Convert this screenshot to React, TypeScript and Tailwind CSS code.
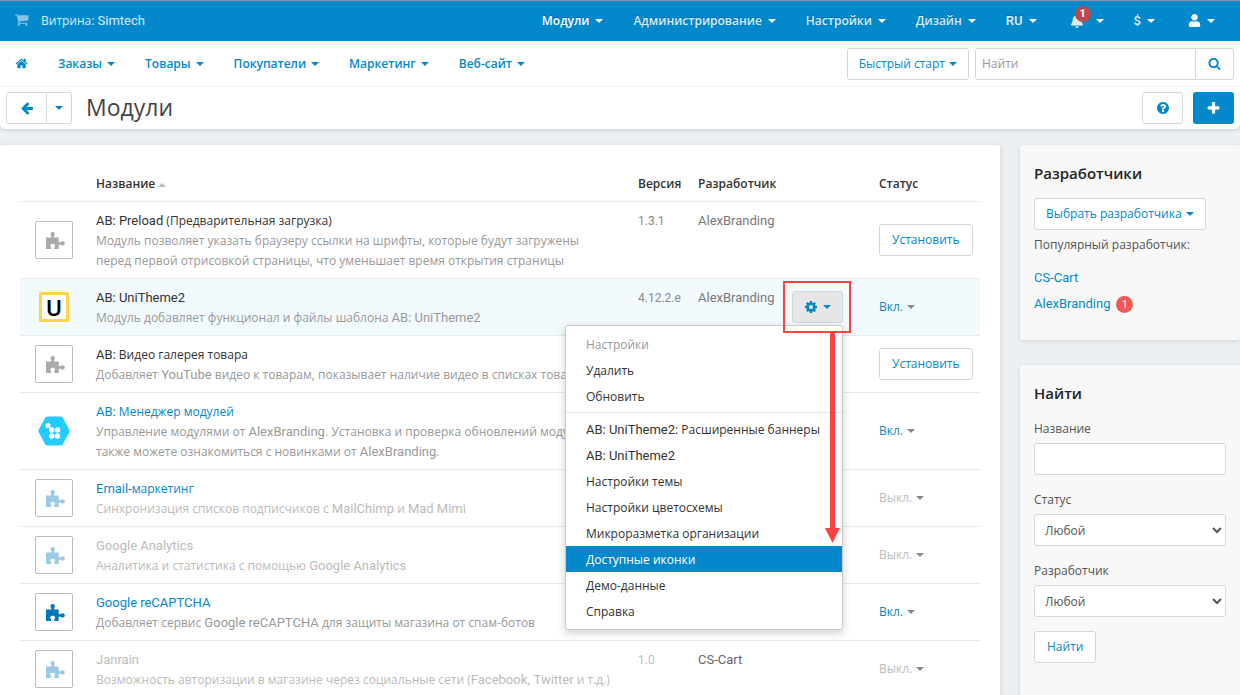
import { Fragment, type ReactNode } from 'react';
import { FaBell, FaUser } from 'react-icons/fa';
import { clsx } from 'clsx';

const ICONS = {
  home: 'M1472 992v480q0 26-19 45t-45 19h-384v-384h-256v384h-384q-26 0-45-19t-19-45v-480q0-1 .5-3t.5-3l575-474 575 474q1 2 1 6zm223-69l-62 74q-8 9-21 11h-3q-13 0-21-7l-692-577-692 577q-12 8-24 7-13-2-21-11l-62-74q-8-10-7-23.5t11-21.5l719-599q32-26 76-26t76 26l244 204v-195q0-14 9-23t23-9h192q14 0 23 9t9 23v408l219 182q10 8 11 21.5t-7 23.5z',
  cart: 'M704 1536q0 52-38 90t-90 38-90-38-38-90 38-90 90-38 90 38 38 90zm896 0q0 52-38 90t-90 38-90-38-38-90 38-90 90-38 90 38 38 90zm128-1088v512q0 24-16.5 42.5t-40.5 21.5l-1044 122q13 60 13 70 0 16-24 64h920q26 0 45 19t19 45-19 45-45 19h-1024q-26 0-45-19t-19-45q0-11 8-31.5t16-36 21.5-40 15.5-29.5l-177-823h-204q-26 0-45-19t-19-45 19-45 45-19h256q16 0 28.5 6.5t19.5 15.5 13 24.5 8 26 5.5 29.5 4.5 26h1201q26 0 45 19t19 45z',
  back: 'M1664 896v128q0 53-32.5 90.5t-84.5 37.5h-704l293 294q38 36 38 90t-38 90l-75 76q-37 37-90 37-52 0-91-37l-651-652q-37-37-37-90 0-52 37-91l651-650q38-38 91-38 52 0 90 38l75 74q38 38 38 91t-38 91l-293 293h704q52 0 84.5 37.5t32.5 90.5z',
  search: 'M1216 832q0-185-131.5-316.5t-316.5-131.5-316.5 131.5-131.5 316.5 131.5 316.5 316.5 131.5 316.5-131.5 131.5-316.5zm512 832q0 52-38 90t-90 38q-54 0-90-38l-343-342q-179 124-399 124-143 0-273.5-55.5t-225-150-150-225-55.5-273.5 55.5-273.5 150-225 225-150 273.5-55.5 273.5 55.5 225 150 150 225 55.5 273.5q0 220-124 399l343 343q37 37 37 90z',
  plus: 'M1600 736v192q0 40-28 68t-68 28h-416v416q0 40-28 68t-68 28h-192q-40 0-68-28t-28-68v-416h-416q-40 0-68-28t-28-68v-192q0-40 28-68t68-28h416v-416q0-40 28-68t68-28h192q40 0 68 28t28 68v416h416q40 0 68 28t28 68z',
  cog: 'M1152 896q0-106-75-181t-181-75-181 75-75 181 75 181 181 75 181-75 75-181zm512-109v222q0 12-8 23t-20 13l-185 28q-19 54-39 91 35 50 107 138 10 12 10 25t-9 23q-27 37-99 108t-94 71q-12 0-26-9l-138-108q-44 23-91 38-16 136-29 186-7 28-36 28h-222q-14 0-24.5-8.5t-11.5-21.5l-28-184q-49-16-90-37l-141 107q-10 9-25 9-14 0-25-11-126-114-165-168-7-10-7-23 0-12 8-23 15-21 51-66.5t54-70.5q-27-50-41-99l-183-27q-13-2-21-12.5t-8-23.5v-222q0-12 8-23t19-13l186-28q14-46 39-92-40-57-107-138-10-12-10-24 0-10 9-23 26-36 98.5-107.5t94.5-71.5q13 0 26 10l138 107q44-23 91-38 16-136 29-186 7-28 36-28h222q14 0 24.5 8.5t11.5 21.5l28 184q49 16 90 37l142-107q9-9 24-9 13 0 25 10 129 119 165 170 7 8 7 22 0 12-8 23-15 21-51 66.5t-54 70.5q26 50 41 98l183 28q13 2 21 12.5t8 23.5z',
  help: 'M1024 1376v-192q0-14-9-23t-23-9h-192q-14 0-23 9t-9 23v192q0 14 9 23t23 9h192q14 0 23-9t9-23zm256-672q0-88-55.5-163t-138.5-116-170-41q-243 0-371 213-15 24 8 42l132 100q7 6 19 6 16 0 25-12 53-68 86-92 34-24 86-24 48 0 85.5 26t37.5 59q0 38-20 61t-68 45q-63 28-115.5 86.5t-52.5 125.5v36q0 14 9 23t23 9h192q14 0 23-9t9-23q0-19 21.5-49.5t54.5-49.5q32-18 49-28.5t46-35 44.5-48 28-60.5 12.5-81zm384 192q0 209-103 385.5t-279.5 279.5-385.5 103-385.5-103-279.5-279.5-103-385.5 103-385.5 279.5-279.5 385.5-103 385.5 103 279.5 279.5 103 385.5z',
};

function Icon({ name, className }: { name: keyof typeof ICONS; className?: string }) {
  return (
    <svg viewBox="0 0 1792 1792" fill="currentColor" className={clsx('shrink-0', className)} aria-hidden="true">
      <path d={ICONS[name]} />
    </svg>
  );
}

function Caret({ className }: { className?: string }) {
  return (
    <svg viewBox="0 0 8 4" fill="currentColor" className={clsx('inline-block h-1 w-2 shrink-0', className)} aria-hidden="true">
      <path d="M0 0h8L4 4z" />
    </svg>
  );
}

function Puzzle({ className }: { className?: string }) {
  return (
    <svg viewBox="0 0 19 17" fill="currentColor" className={clsx('h-[17px] w-[19px]', className)} aria-hidden="true">
      <path d="M0 5.5h5.3c.3-.6.1-1.200-.3-1.800C3.900 2 4.700 0 6.700 0s2.800 2 1.700 3.700c-.4.600-.6 1.200-.3 1.800h4.600v4.200c.5.600 1.200.700 1.900.200 1.700-1.300 4.200-.6 4.200 1.500s-2.500 2.800-4.200 1.500c-.7-.5-1.400-.4-1.900.200V17H8.500c-.5-.7-.4-1.300.1-2 1.100-1.600.2-3.200-1.900-3.200s-3 1.600-1.900 3.200c.5.700.6 1.300.1 2H0z" />
    </svg>
  );
}

// Cyrillic is set in Open Sans, latin words and numbers in Roboto
function Txt({ children }: { children: string }) {
  return (
    <>
      {children.split(/([A-Za-z0-9][A-Za-z0-9.-]*)/).map((part, i) =>
        i % 2 ? (
          <span key={i} className="font-[Roboto,'Open_Sans',sans-serif] text-[13px] leading-none">{part}</span>
        ) : (
          <Fragment key={i}>{part}</Fragment>
        ),
      )}
    </>
  );
}

type Status = 'install' | 'on' | 'off';

interface Addon {
  name: string;
  text: string;
  logo: 'gray' | 'light' | 'blue' | 'unitheme' | 'manager';
  nameClass: string;
  textClass: string;
  status: Status;
  version?: string;
  developer?: string;
  active?: boolean;
}

const LINK = 'text-[#0388cc]';

const addons: Addon[] = [
  { name: 'AB: Preload (Предварительная загрузка)', text: 'Модуль позволяет указать браузеру ссылки на шрифты, которые будут загружены перед первой отрисовкой страницы, что уменьшает время открытия страницы', logo: 'gray', nameClass: 'text-[#333]', textClass: 'text-[#999]', status: 'install', version: '1.3.1', developer: 'AlexBranding' },
  { name: 'AB: UniTheme2', text: 'Модуль добавляет функционал и файлы шаблона AB: UniTheme2', logo: 'unitheme', nameClass: 'text-[#333]', textClass: 'text-[#999]', status: 'on', version: '4.12.2.e', developer: 'AlexBranding', active: true },
  { name: 'AB: Видео галерея товара', text: 'Добавляет YouTube видео к товарам, показывает наличие видео в списках товаров', logo: 'gray', nameClass: 'text-[#333]', textClass: 'text-[#999]', status: 'install' },
  { name: 'AB: Менеджер модулей', text: 'Управление модулями от AlexBranding. Установка и проверка обновлений модулей, также можете ознакомиться с новинками от AlexBranding.', logo: 'manager', nameClass: LINK, textClass: 'text-[#999]', status: 'on' },
  { name: 'Email-маркетинг', text: 'Синхронизация списков подписчиков с MailChimp и Mad Mimi', logo: 'light', nameClass: LINK, textClass: 'text-[#bbb]', status: 'off' },
  { name: 'Google Analytics', text: 'Аналитика и статистика с помощью Google Analytics', logo: 'light', nameClass: 'text-[#bbb]', textClass: 'text-[#bbb]', status: 'off' },
  { name: 'Google reCAPTCHA', text: 'Добавляет сервис Google reCAPTCHA для защиты магазина от спам-ботов', logo: 'blue', nameClass: LINK, textClass: 'text-[#999]', status: 'on' },
  { name: 'Janrain', text: 'Возможность авторизации в магазине через социальные сети (Facebook, Twitter и т.д.)', logo: 'light', nameClass: 'text-[#bbb]', textClass: 'text-[#bbb]', status: 'off', version: '1.0', developer: 'CS-Cart' },
];

function Logo({ kind }: { kind: Addon['logo'] }) {
  if (kind === 'unitheme') {
    return (
      <div className="mx-1 flex size-[30px] items-center justify-center border-[3px] border-[#fdd54a] bg-white font-['Noto_Sans',sans-serif] text-[22px] leading-6 font-semibold text-black">
        U
      </div>
    );
  }
  if (kind === 'manager') {
    return (
      <svg viewBox="0 0 32 30" className="mx-[3px] h-[30px] w-8" aria-hidden="true">
        <path d="M9.500.5h13q1.500 0 2.300 1.300l6.400 11.600q.8 1.600 0 3.200l-6.400 11.600q-.8 1.300-2.300 1.300h-13q-1.500 0-2.300-1.300L.8 16.600q-.8-1.600 0-3.200L7.200 1.800Q8 .5 9.500.5z" fill="#22ccff" />
        <g fill="#fff">
          <circle cx="10" cy="9.500" r="2.600" />
          <circle cx="13.700" cy="14" r="2.700" />
          <circle cx="19.500" cy="14" r="2.700" />
          <circle cx="13.700" cy="20" r="2.700" />
          <circle cx="19.500" cy="20" r="2.700" />
        </g>
      </svg>
    );
  }
  return (
    <div className="flex size-[38px] items-center justify-center rounded-xs border border-[#bbb] bg-white">
      <Puzzle className={clsx('ml-0.5', kind === 'gray' && 'text-[#aaa]', kind === 'light' && 'text-[#99c9e6]', kind === 'blue' && 'text-[#0377bd]')} />
    </div>
  );
}

function Button({ children, className, label }: { children: ReactNode; className?: string; label?: string }) {
  return (
    <button type="button" aria-label={label} className={clsx('flex h-8 items-center justify-center rounded-[3px] border border-[#d0d9e1] bg-white text-[#0388cc]', className)}>
      {children}
    </button>
  );
}

const menuGroups = [
  ['Настройки', 'Удалить', 'Обновить'],
  ['AB: UniTheme2: Расширенные баннеры', 'AB: UniTheme2', 'Настройки темы', 'Настройки цветосхемы', 'Микроразметка организации', 'Доступные иконки', 'Демо-данные', 'Справка'],
];

function GearMenu() {
  return (
    <div className="relative z-10 h-8 w-[51px]">
      <button type="button" aria-label="Действия" className="flex h-8 w-full items-center justify-center gap-[5px] rounded-[3px] border border-[#d0d9e1] bg-[#e6e6e6] text-[#0388cc]">
        <Icon name="cog" className="size-[14px]" />
        <Caret />
      </button>
      <div className="absolute top-full right-0 mt-0.5 w-[278px] rounded-[3px] border border-[#ccc] bg-white py-[5px] shadow-[0_3px_8px_rgba(0,0,0,0.2)]">
        {menuGroups.map((group, i) => (
          <ul key={i} className={clsx(i > 0 && 'mt-[3px] border-t border-[#e5e5e5] pt-[3px]')}>
            {group.map((item) => (
              <li key={item}>
                <a
                  href="#"
                  className={clsx(
                    'block px-5 pt-0.5 leading-6 whitespace-nowrap',
                    item === 'Доступные иконки' ? 'bg-[#0388cc] text-white' : item === 'Настройки' ? 'text-[#999]' : 'text-[#333]',
                  )}
                >
                  <Txt>{item}</Txt>
                </a>
              </li>
            ))}
          </ul>
        ))}
      </div>
      <div className="pointer-events-none absolute -top-[10px] -right-2 -bottom-[10px] -left-[9px] border-2 border-[#fb4346]" />
      <svg viewBox="0 0 15 211" className="pointer-events-none absolute top-[41px] right-[3px] h-[211px] w-[15px]" aria-hidden="true">
        <path d="M5 3q0-3 2.500-3T10 3v193h5L7.500 211 0 196h5z" fill="#fb4346" />
      </svg>
    </div>
  );
}

function StatusCell({ status }: { status: Status }) {
  if (status === 'install') return <Button className="px-3">Установить</Button>;
  return (
    <button type="button" className={clsx('flex items-center gap-1', status === 'on' ? 'text-[#0388cc]' : 'text-[#bbb]')}>
      {status === 'on' ? 'Вкл.' : 'Выкл.'}
      <Caret className="text-[#888]" />
    </button>
  );
}

function TopBar() {
  const items = ['Модули', 'Администрирование', 'Настройки', 'Дизайн', 'RU'];
  const item = 'flex items-center gap-1.5 px-[15px] text-[#d9edf8] text-shadow-[0_-1px_0_rgba(0,0,0,0.25)]';
  return (
    <div className="flex h-[41px] items-center justify-between border-t border-[#7f9ba8] bg-[#0388cc]">
      <a href="#" className="flex items-center gap-3 pl-3.5 text-[#d9edf8]">
        <Icon name="cart" className="mb-1 size-[15px] opacity-60" />
        <span><Txt>Витрина: Simtech</Txt></span>
      </a>
      <nav className="flex items-center pr-[10px] font-semibold">
        {items.map((name, i) => (
          <a key={name} href="#" className={clsx(item, i === 0 && 'text-white')}>
            <span><Txt>{name}</Txt></span>
            <Caret className="text-white" />
          </a>
        ))}
        <a href="#" aria-label="Уведомления" className={clsx(item, 'relative pl-[18px]')}>
          <FaBell className="mr-1.5 size-[14px]" />
          <span className="absolute -top-2 left-[23px] flex size-4 items-center justify-center rounded-full bg-[#bb4a48] font-[Roboto,sans-serif] text-[11px] font-bold text-white">1</span>
          <Caret className="text-white" />
        </a>
        <a href="#" className={item}>
          <span className="font-[Roboto,sans-serif] text-[13px]">$</span>
          <Caret className="text-white" />
        </a>
        <a href="#" aria-label="Профиль" className={clsx(item, 'pl-[18px]')}>
          <FaUser className="size-[13px] text-white" />
          <Caret className="text-white" />
        </a>
      </nav>
    </div>
  );
}

function Header() {
  return (
    <header className="rounded-b-[5px] bg-white shadow-[0_1px_4px_rgba(0,0,0,0.15)]">
      <TopBar />
      <div className="flex h-[46px] items-center justify-between border-b border-[#f2f2f2] pr-1.5 text-[#0388cc]">
        <nav className="flex items-center font-semibold">
          <a href="#" aria-label="Главная" className="px-[15px]">
            <Icon name="home" className="size-[13px]" />
          </a>
          {['Заказы', 'Товары', 'Покупатели', 'Маркетинг', 'Веб-сайт'].map((name) => (
            <a key={name} href="#" className="flex items-center gap-[5px] px-[15px]">
              {name}
              <Caret />
            </a>
          ))}
        </nav>
        <div className="flex gap-1.5">
          <Button className="gap-1 px-[11px]">
            Быстрый старт <Caret />
          </Button>
          <form className="flex">
            <input type="search" aria-label="Найти" placeholder="Найти" className="h-8 w-[221px] rounded-l-[3px] border border-[#d0d9e1] px-1.5 placeholder:text-[#999]" />
            <Button label="Искать" className="w-[38px] rounded-l-none border-l-0">
              <Icon name="search" className="size-[13px]" />
            </Button>
          </form>
        </div>
      </div>
      <div className="flex h-[42px] items-center justify-between px-1.5">
        <div className="flex items-center">
          <Button label="Назад" className="w-[41px] rounded-r-none">
            <Icon name="back" className="size-[14px]" />
          </Button>
          <Button label="История" className="w-[25px] rounded-l-none border-l-0">
            <Caret />
          </Button>
          <h1 className="pb-0.5 pl-3.5 text-[23px] leading-7 text-[#444]">Модули</h1>
        </div>
        <div className="flex gap-[10px]">
          <Button label="Помощь" className="w-[41px]">
            <Icon name="help" className="size-[14px]" />
          </Button>
          <button type="button" aria-label="Добавить" className="flex h-8 w-[41px] items-center justify-center rounded-[3px] bg-[#0388cc] text-white">
            <Icon name="plus" className="size-[15px]" />
          </button>
        </div>
      </div>
    </header>
  );
}

function AddonsTable() {
  return (
    <main className="min-w-0 flex-1 rounded-[3px] bg-white px-5 pt-5 shadow-[0_1px_5px_rgba(0,0,0,0.12)]">
      <table className="w-full table-fixed text-left leading-5">
        <colgroup>
          <col className="w-[68px]" />
          <col />
          <col className="w-[60px]" />
          <col className="w-[94px]" />
          <col className="w-[87px]" />
          <col className="w-[109px]" />
        </colgroup>
        <thead>
          <tr className="border-b border-[#e8eaec] text-[#333] [&>th]:px-2 [&>th]:pt-[9px] [&>th]:pb-[7px] [&>th]:font-semibold">
            <th />
            <th>
              Название <Caret className="rotate-180 align-middle text-[#bbb]" />
            </th>
            <th className="whitespace-nowrap">Версия</th>
            <th>Разработчик</th>
            <th />
            <th>Статус</th>
          </tr>
        </thead>
        <tbody>
          {addons.map((addon) => (
            <tr key={addon.name} className={clsx('border-b border-[#e8eaec]', addon.active && 'bg-[#f2fafe]')}>
              <td className="pl-[15px] align-middle">
                <Logo kind={addon.logo} />
              </td>
              <td className="pt-[9px] pr-4 pb-[7px] pl-2 align-top">
                <a href="#" className={clsx('block', addon.nameClass)}>
                  <Txt>{addon.name}</Txt>
                </a>
                <p className={addon.textClass}>
                  <Txt>{addon.text}</Txt>
                </p>
              </td>
              <td className={clsx('px-2 pt-[9px] pb-[7px] align-top font-[Roboto,sans-serif]', addon.status === 'off' ? 'text-[#bbb]' : 'text-[#888]')}>
                {addon.version}
              </td>
              <td className={clsx('px-2 pt-[9px] pb-[7px] align-top', addon.status === 'off' ? 'text-[#666]' : 'text-[#777]')}>
                {addon.developer && <Txt>{addon.developer}</Txt>}
              </td>
              <td className="px-2 align-middle">{addon.active && <GearMenu />}</td>
              <td className="px-2 align-middle">
                <StatusCell status={addon.status} />
              </td>
            </tr>
          ))}
        </tbody>
      </table>
    </main>
  );
}

function Sidebar() {
  const card = 'rounded-[3px] bg-[#f8f8f8] px-3.5 shadow-[0_1px_4px_rgba(0,0,0,0.12)]';
  const field = 'mt-1 mb-3.5 block h-8 w-full rounded-[3px] border border-[#d0d9e1] bg-white px-1.5 text-[#555]';
  return (
    <aside className="flex w-[220px] shrink-0 flex-col gap-[25px] leading-5 text-[#555]">
      <section className={clsx(card, 'pt-[18px] pb-[23px]')}>
        <h2 className="text-[15px] leading-5 font-semibold text-[#222]">Разработчики</h2>
        <Button className="mt-[15px] gap-1 px-[11px]">
          Выбрать разработчика <Caret />
        </Button>
        <p className="mt-[5px]">Популярный разработчик:</p>
        <ul className="mt-[10px] leading-[26px] text-[#0388cc]">
          <li>
            <a href="#"><Txt>CS-Cart</Txt></a>
          </li>
          <li className="flex items-center gap-1.5">
            <a href="#"><Txt>AlexBranding</Txt></a>
            <span className="flex size-[17px] items-center justify-center rounded-full bg-[#eb5a55] text-[11px] text-white">1</span>
          </li>
        </ul>
      </section>
      <section className={clsx(card, 'flex-1 pt-[18px] pb-8')}>
        <h2 className="text-[15px] leading-5 font-semibold text-[#222]">Найти</h2>
        <form className="mt-[15px]">
          <label htmlFor="addon-name" className="block pt-px">Название</label>
          <input id="addon-name" type="text" className={field} />
          <label htmlFor="addon-status" className="block pt-px">Статус</label>
          <select id="addon-status" className={field}>
            <option>Любой</option>
          </select>
          <label htmlFor="addon-developer" className="block pt-px">Разработчик</label>
          <select id="addon-developer" className={field}>
            <option>Любой</option>
          </select>
          <Button className="px-3">Найти</Button>
        </form>
      </section>
    </aside>
  );
}

export default function App() {
  return (
    <div className="flex h-screen flex-col overflow-hidden bg-[#ecf0f3] font-['Open_Sans',sans-serif] text-xs">
      <Header />
      <div className="flex flex-1 gap-5 pt-4">
        <AddonsTable />
        <Sidebar />
      </div>
    </div>
  );
}
